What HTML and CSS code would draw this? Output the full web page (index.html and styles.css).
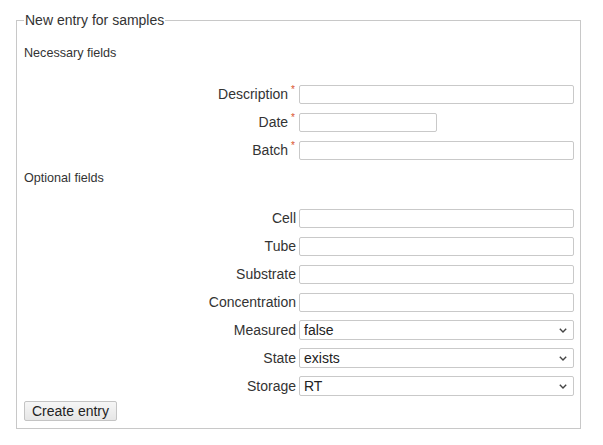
FILE: index.html
```html
<!DOCTYPE html>
<html>
<head>
<meta charset="utf-8">
<link rel="stylesheet" href="styles.css">
</head>
<body>
<form class="entry-form">
  <fieldset class="box">
    <legend class="box-title">New entry for samples</legend>
    <div class="section-title first">Necessary fields</div>
    <div class="rows">
      <label class="lbl">Description<sup class="req">*</sup></label>
      <div class="cell"><input class="field" type="text"></div>
      <label class="lbl">Date<sup class="req">*</sup></label>
      <div class="cell"><input class="field short" type="text"></div>
      <label class="lbl">Batch<sup class="req">*</sup></label>
      <div class="cell"><input class="field" type="text"></div>
    </div>
    <div class="section-title">Optional fields</div>
    <div class="rows">
      <label class="lbl">Cell</label>
      <div class="cell"><input class="field" type="text"></div>
      <label class="lbl">Tube</label>
      <div class="cell"><input class="field" type="text"></div>
      <label class="lbl">Substrate</label>
      <div class="cell"><input class="field" type="text"></div>
      <label class="lbl">Concentration</label>
      <div class="cell"><input class="field" type="text"></div>
      <label class="lbl">Measured</label>
      <div class="cell"><div class="select"><span>false</span><svg class="chev" width="8" height="5" viewBox="0 0 8 5"><path d="M0.8 0.8 L4 4 L7.2 0.8" fill="none" stroke="#444" stroke-width="1.4"/></svg></div></div>
      <label class="lbl">State</label>
      <div class="cell"><div class="select"><span>exists</span><svg class="chev" width="8" height="5" viewBox="0 0 8 5"><path d="M0.8 0.8 L4 4 L7.2 0.8" fill="none" stroke="#444" stroke-width="1.4"/></svg></div></div>
      <label class="lbl">Storage</label>
      <div class="cell"><div class="select"><span>RT</span><svg class="chev" width="8" height="5" viewBox="0 0 8 5"><path d="M0.8 0.8 L4 4 L7.2 0.8" fill="none" stroke="#444" stroke-width="1.4"/></svg></div></div>
    </div>
    <button class="btn" type="button">Create entry</button>
  </fieldset>
</form>
</body>
</html>
```

FILE: styles.css
```css
html, body {
  margin: 0;
  padding: 0;
  background: #fff;
}
body {
  font-family: "Liberation Sans", Arial, sans-serif;
  color: #333;
  font-size: 14px;
}
.entry-form {
  padding: 12px 0 0 16px;
}
.box {
  margin: 0;
  width: 565px;
  box-sizing: border-box;
  border: 1px solid #c8c8c8;
  padding: 0 7px 7px 7px;
  min-width: 0;
}
.box-title {
  font-size: 14px;
  line-height: 16px;
  padding: 0 1px;
  margin-left: 0;
  color: #333;
}
.section-title {
  font-size: 12.6px;
  line-height: 14px;
  margin: 7px 0 19px 0;
}
.section-title.first {
  margin-top: 18px;
  margin-bottom: 20px;
}
.rows {
  display: grid;
  grid-template-columns: 272px 275px;
  column-gap: 3px;
  grid-auto-rows: 28px;
}
.lbl {
  text-align: right;
  align-self: center;
  font-size: 14px;
  line-height: 16px;
  white-space: nowrap;
}
.req {
  color: #d9532c;
  font-size: 10px;
  line-height: 0;
  vertical-align: 0;
  position: relative;
  top: -6px;
  margin-left: 3px;
  margin-right: 1px;
}
.cell {
  display: flex;
  align-items: center;
}
.field {
  box-sizing: border-box;
  width: 275px;
  height: 19px;
  margin: 0;
  border: 1px solid #c9c9c9;
  border-radius: 2px;
  padding: 0 4px;
  font-family: "Liberation Sans", Arial, sans-serif;
  font-size: 14px;
  background: #fff;
}
.field.short {
  width: 138px;
}
.select {
  box-sizing: border-box;
  width: 275px;
  height: 20px;
  border: 1px solid #c9c9c9;
  border-radius: 2px;
  padding: 0 6px 0 4px;
  display: flex;
  align-items: center;
  justify-content: space-between;
  font-size: 14px;
  line-height: 16px;
  color: #222;
  background: #fff;
}
.chev {
  display: block;
}
.btn {
  margin-top: 1px;
  box-sizing: border-box;
  height: 20px;
  padding: 0 7px;
  font-family: "Liberation Sans", Arial, sans-serif;
  font-size: 14px;
  line-height: 16px;
  color: #222;
  border: 1px solid #c4c4c4;
  border-radius: 2px;
  background: linear-gradient(#f6f6f6, #e6e6e6);
}
```
